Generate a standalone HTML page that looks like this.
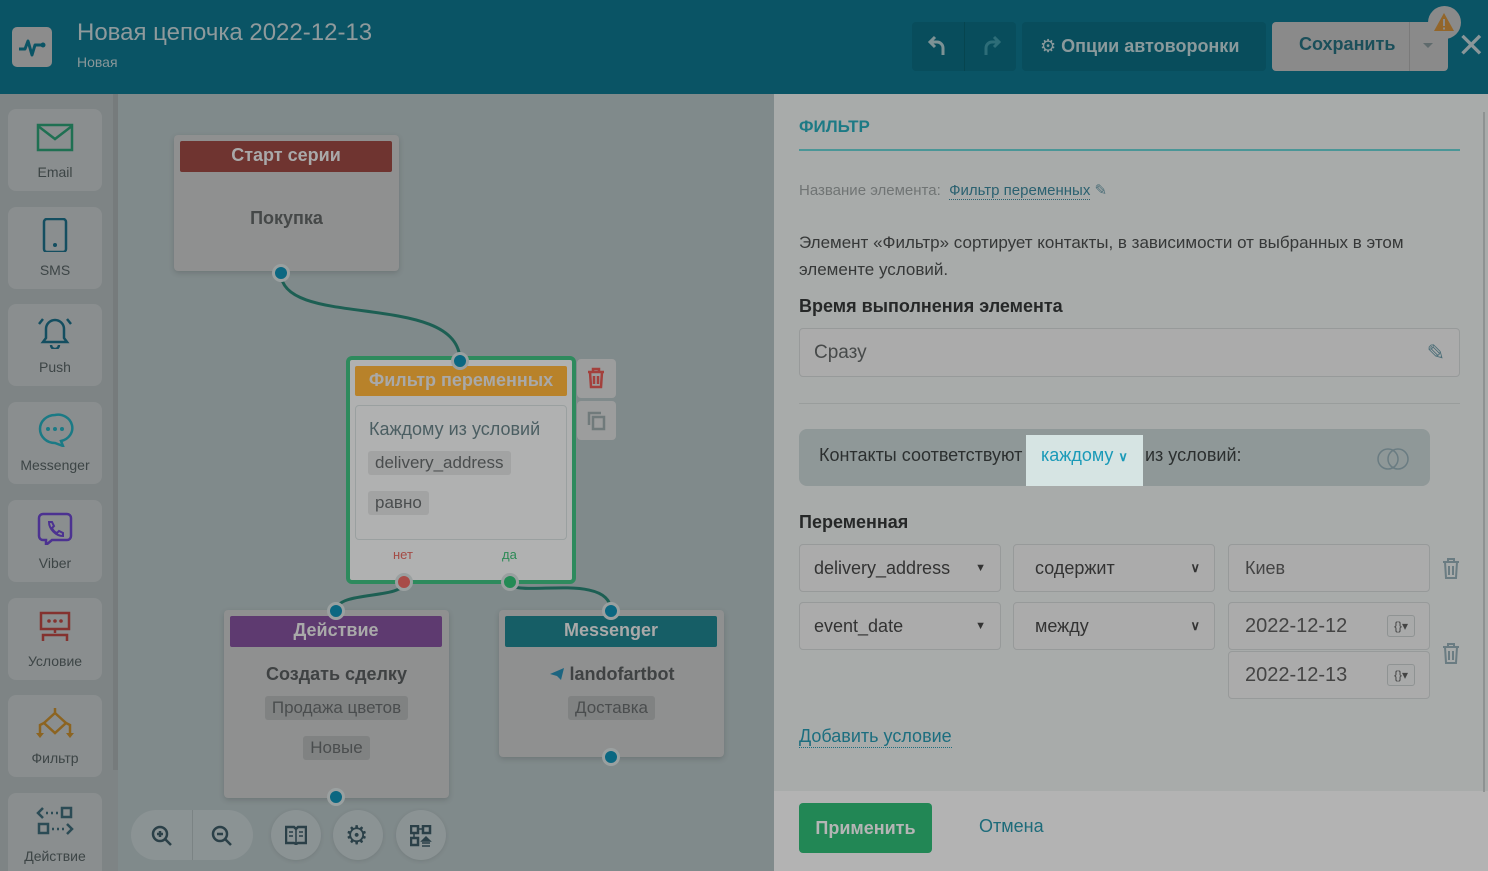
<!DOCTYPE html>
<html style="overflow:hidden;height:871px"><head><meta charset="utf-8"><style>
*{box-sizing:border-box;margin:0;padding:0}
html,body{overflow:hidden}
body{width:1488px;height:871px;overflow:hidden;position:relative;font-family:"Liberation Sans","DejaVu Sans",sans-serif;background:#808a8b}
.a{position:absolute}
.hdr{left:0;top:0;width:1488px;height:94px;background:#0a5465}
.side{left:0;top:94px;width:118px;height:777px;background:#7e8485}
.sitem{left:8px;width:94px;height:82px;background:#8a8e8f;border-radius:8px;text-align:center;color:#3d4546;font-size:14px;overflow:hidden}
.sitem svg{display:block;margin:11px auto 10px}
.node{background:#8f9090;border-radius:4px;box-shadow:0 2px 6px rgba(0,0,0,.15)}
.nh{color:#a9a9a9;font-weight:bold;font-size:18px;text-align:center;border-radius:2px}
.dot{width:18px;height:18px;border-radius:50%;background:#0b6781;border:3px solid #9aa0a0}
.tag{background:#808282;color:#4a4d4e;padding:2px 7px;border-radius:3px;font-size:17px;display:inline-block}
.panel{left:774px;top:94px;width:714px;height:697px;background:#a8abaa}
.foot{left:774px;top:791px;width:714px;height:80px;background:#b3b3b3}
.nar{font-family:"Liberation Sans Narrow","Liberation Sans",sans-serif}
.inp{border:1px solid #979a9a;border-radius:4px;background:#ababab;color:#333;font-size:18px;padding:0 14px;display:flex;align-items:center}
.circ{width:50px;height:50px;border-radius:50%;background:#8b9394;box-shadow:0 1px 4px rgba(0,0,0,.1)}
</style></head><body>
<div class="a hdr"></div>
<div class="a" style="left:12px;top:27px;width:40px;height:40px;background:#8c8c8c;border-radius:5px"></div>
<svg class="a" style="left:12px;top:27px" width="40" height="40"><path d="M7 22h6l3-8 4 14 3-10h7" fill="none" stroke="#0a5465" stroke-width="3" stroke-linejoin="round"/><circle cx="31" cy="18" r="2.5" fill="#0a5465"/></svg>
<div class="a" style="left:77px;top:19px;color:#8f9a9c;font-size:24px">Новая цепочка 2022-12-13</div>
<div class="a" style="left:77px;top:54px;color:#8a9799;font-size:14px">Новая</div>
<div class="a" style="left:912px;top:22px;width:104px;height:49px;background:#084d5c;border-radius:4px"></div>
<div class="a" style="left:964px;top:22px;width:1px;height:49px;background:#06454f"></div>
<svg class="a" style="left:927px;top:34px" width="22" height="24"><path d="M8 3L3 8l5 5M3 8h7a6 6 0 016 6v7" fill="none" stroke="#7d9295" stroke-width="3"/></svg>
<svg class="a" style="left:980px;top:34px" width="22" height="24"><path d="M14 3l5 5-5 5M19 8h-7a6 6 0 00-6 6v7" fill="none" stroke="#2d6d78" stroke-width="3"/></svg>
<div class="a" style="left:1022px;top:22px;width:244px;height:49px;background:#084d5c;border-radius:4px;color:#8b9a9c;font-size:18px;font-weight:bold;line-height:49px;padding-left:18px">⚙ Опции автоворонки</div>
<div class="a" style="left:1272px;top:22px;width:176px;height:49px;background:#8a8a8a;border-radius:4px"></div>
<div class="a" style="left:1299px;top:34px;color:#1b4f5a;font-size:18px;font-weight:bold">Сохранить</div>
<div class="a" style="left:1409px;top:22px;width:1px;height:49px;background:#7a7a7a"></div>
<div class="a" style="left:1423px;top:43px;border:5px solid transparent;border-top-color:#5f6a6c"></div>
<div class="a" style="left:1428px;top:6px;width:33px;height:33px;border-radius:50%;background:#8a8a8a"></div>
<svg class="a" style="left:1432px;top:10px" width="24" height="24"><path d="M12 3L22 21H2Z" fill="#93662a"/><rect x="11" y="9" width="2" height="7" fill="#8a8a8a"/><rect x="11" y="17.5" width="2" height="2" fill="#8a8a8a"/></svg>
<div class="a" style="left:1457px;top:26px;color:#8a9699;font-size:34px;font-weight:bold">✕</div>

<div class="a side"></div>
<div class="a" style="left:113px;top:94px;width:5px;height:676px;background:#767b7c"></div>
<div class="a sitem" style="top:109px"><svg width="40" height="34"><rect x="3" y="5" width="34" height="25" fill="none" stroke="#1f7052" stroke-width="2.5"/><path d="M3 6l17 13 17-13" fill="none" stroke="#1f7052" stroke-width="2.5"/></svg>Email</div>
<div class="a sitem" style="top:207px"><svg width="40" height="34"><rect x="9" y="1" width="22" height="33" rx="3" fill="none" stroke="#144e60" stroke-width="2.5"/><circle cx="20" cy="27" r="2" fill="#144e60"/></svg>SMS</div>
<div class="a sitem" style="top:304px"><svg width="40" height="34"><path d="M8 27h24l-3-4V14a9 9 0 00-18 0v9z" fill="none" stroke="#144e60" stroke-width="2.5"/><path d="M4 9l4-5M36 9l-4-5" stroke="#144e60" stroke-width="2.5"/><path d="M16 30a4 4 0 008 0" fill="none" stroke="#144e60" stroke-width="2.5"/></svg>Push</div>
<div class="a sitem" style="top:402px"><svg width="40" height="34"><path d="M20 2a15 14 0 100 28l8 3-2-5a14 13 0 00-6-26z" fill="none" stroke="#1b7a85" stroke-width="2.5"/><circle cx="13" cy="16" r="2" fill="#1b7a85"/><circle cx="20" cy="16" r="2" fill="#1b7a85"/><circle cx="27" cy="16" r="2" fill="#1b7a85"/></svg>Messenger</div>
<div class="a sitem" style="top:500px"><svg width="40" height="34"><path d="M8 3h24a4 4 0 014 4v18a4 4 0 01-4 4H17l-6 5v-5H8a4 4 0 01-4-4V7a4 4 0 014-4z" fill="none" stroke="#4c3291" stroke-width="2.5"/><path d="M14 11l3 0 2 4-2 2a9 9 0 005 5l2-2 4 2v3c-7 0-14-7-14-14z" fill="none" stroke="#4c3291" stroke-width="2"/></svg>Viber</div>
<div class="a sitem" style="top:598px"><svg width="40" height="34"><rect x="6" y="4" width="28" height="16" fill="none" stroke="#84322f" stroke-width="2.5"/><circle cx="14" cy="12" r="1.8" fill="#84322f"/><circle cx="20" cy="12" r="1.8" fill="#84322f"/><circle cx="26" cy="12" r="1.8" fill="#84322f"/><path d="M20 20v4M8 32v-6h24v6" fill="none" stroke="#84322f" stroke-width="2.5"/></svg>Условие</div>
<div class="a sitem" style="top:695px"><svg width="40" height="34"><path d="M20 2v5l-11 10 11 10 11-10-11-10" fill="none" stroke="#8c6421" stroke-width="2.5"/><path d="M9 17l-4 2v9M31 17l4 2v9" fill="none" stroke="#8c6421" stroke-width="2.5"/><path d="M1 27h8l-4 5zM31 27h8l-4 5z" fill="#8c6421"/></svg>Фильтр</div>
<div class="a sitem" style="top:793px;height:78px;border-radius:8px 8px 0 0"><svg width="40" height="34"><path d="M8 4l-5 5 5 5" fill="none" stroke="#2b4b55" stroke-width="2.5"/><path d="M11 9h2M16 9h2M21 9h2" stroke="#2b4b55" stroke-width="2.5"/><rect x="27" y="4" width="9" height="9" fill="none" stroke="#2b4b55" stroke-width="2.5"/><rect x="4" y="20" width="9" height="9" fill="none" stroke="#2b4b55" stroke-width="2.5"/><path d="M17 25h2M22 25h2M27 25h2" stroke="#2b4b55" stroke-width="2.5"/><path d="M32 20l5 5-5 5" fill="none" stroke="#2b4b55" stroke-width="2.5"/></svg>Действие</div>

<svg class="a" style="left:0;top:0" width="774" height="871"><g fill="none" stroke="#1d5f53" stroke-width="3"><path d="M281 273C281 330 460 290 460 361"/><path d="M404 582C404 600 336 590 336 611"/><path d="M510 582C510 600 611 570 611 611"/></g></svg>

<div class="a node" style="left:174px;top:135px;width:225px;height:136px"></div>
<div class="a nh" style="left:180px;top:141px;width:212px;height:31px;line-height:29px;background:#6f3430">Старт серии</div>
<div class="a" style="left:174px;top:208px;width:225px;text-align:center;font-weight:bold;color:#454848;font-size:18px">Покупка</div>
<div class="a dot" style="left:272px;top:264px"></div>

<div class="a" style="left:346px;top:356px;width:230px;height:228px;background:#b0b1b1;border:4px solid #2e8a5d;border-radius:6px"></div>
<div class="a nh" style="left:355px;top:366px;width:212px;height:30px;line-height:28px;background:#b8822a">Фильтр переменных</div>
<div class="a" style="left:355px;top:405px;width:212px;height:135px;border:1px solid #9aa0a0;border-radius:4px"></div>
<div class="a" style="left:369px;top:419px;color:#4b5e62;font-size:18px">Каждому из условий</div>
<div class="a tag" style="left:368px;top:451px;background:#a2a3a3">delivery_address</div>
<div class="a tag" style="left:368px;top:491px;background:#a2a3a3">равно</div>
<div class="a" style="left:393px;top:547px;color:#a44b45;font-size:13px">нет</div>
<div class="a" style="left:502px;top:547px;color:#2b8a55;font-size:13px">да</div>
<div class="a dot" style="left:451px;top:352px"></div>
<div class="a dot" style="left:395px;top:573px;background:#a84c48"></div>
<div class="a dot" style="left:501px;top:573px;background:#238a55"></div>
<div class="a" style="left:577px;top:359px;width:39px;height:39px;background:#9c9d9d;border-radius:4px"></div>
<svg class="a" style="left:586px;top:367px" width="20" height="22"><path d="M2 5h16M7 5V2h6v3M4 5l1 15h10l1-15M8 9v8M12 9v8" fill="none" stroke="#a3403c" stroke-width="2.5"/></svg>
<div class="a" style="left:577px;top:401px;width:39px;height:39px;background:#9c9d9d;border-radius:4px"></div>
<svg class="a" style="left:586px;top:410px" width="22" height="22"><path d="M3 15V3h12" fill="none" stroke="#707a7b" stroke-width="2.5"/><rect x="7" y="7" width="11" height="12" fill="none" stroke="#707a7b" stroke-width="2.5"/></svg>

<div class="a node" style="left:224px;top:610px;width:225px;height:188px"></div>
<div class="a nh" style="left:230px;top:616px;width:212px;height:31px;line-height:29px;background:#5e3a70">Действие</div>
<div class="a" style="left:224px;top:664px;width:225px;text-align:center;font-weight:bold;color:#3f4243;font-size:18px">Создать сделку</div>
<div class="a" style="left:224px;top:696px;width:225px;text-align:center"><span class="tag">Продажа цветов</span></div>
<div class="a" style="left:224px;top:736px;width:225px;text-align:center"><span class="tag">Новые</span></div>
<div class="a dot" style="left:327px;top:602px"></div>
<div class="a dot" style="left:327px;top:788px"></div>

<div class="a node" style="left:499px;top:610px;width:225px;height:147px"></div>
<div class="a nh" style="left:505px;top:616px;width:212px;height:31px;line-height:29px;background:#165e66">Messenger</div>
<div class="a" style="left:499px;top:664px;width:225px;text-align:center;font-weight:bold;color:#3f4243;font-size:18px"><svg width="16" height="14" style="vertical-align:-1px"><path d="M1 7L15 1l-3 12-4-4z" fill="#1d6580"/></svg> landofartbot</div>
<div class="a" style="left:499px;top:696px;width:225px;text-align:center"><span class="tag">Доставка</span></div>
<div class="a dot" style="left:602px;top:602px"></div>
<div class="a dot" style="left:602px;top:748px"></div>

<div class="a" style="left:131px;top:810px;width:122px;height:50px;border-radius:25px;background:#8b9394"></div>
<div class="a" style="left:192px;top:810px;width:1px;height:50px;background:#7b8384"></div>
<svg class="a" style="left:151px;top:825px" width="22" height="22"><circle cx="9" cy="9" r="7" fill="none" stroke="#2b4048" stroke-width="2.5"/><path d="M14 14l6 6M6 9h6M9 6v6" stroke="#2b4048" stroke-width="2.5"/></svg>
<svg class="a" style="left:211px;top:825px" width="22" height="22"><circle cx="9" cy="9" r="7" fill="none" stroke="#2b4048" stroke-width="2.5"/><path d="M14 14l6 6M6 9h6" stroke="#2b4048" stroke-width="2.5"/></svg>
<div class="a circ" style="left:271px;top:810px"></div>
<svg class="a" style="left:285px;top:825px" width="22" height="20"><path d="M1 2h8l2 2 2-2h8v16h-8l-2 1-2-1H1z" fill="none" stroke="#2b4048" stroke-width="2.5"/><path d="M11 4v15M4 7h4M4 11h4M14 7h4M14 11h4" stroke="#2b4048" stroke-width="1.5"/></svg>
<div class="a circ" style="left:333px;top:810px"></div>
<div class="a" style="left:345px;top:820px;color:#2b4048;font-size:26px;line-height:30px">⚙</div>
<div class="a circ" style="left:396px;top:810px"></div>
<svg class="a" style="left:410px;top:825px" width="22" height="22"><rect x="1" y="1" width="7" height="7" fill="none" stroke="#2b4048" stroke-width="2.5"/><rect x="13" y="1" width="7" height="7" fill="none" stroke="#2b4048" stroke-width="2.5"/><rect x="1" y="13" width="7" height="7" fill="none" stroke="#2b4048" stroke-width="2.5"/><path d="M8 4h5M4 8v5M12 16l4-4 4 4zM12 18h8M12 21h8" stroke="#2b4048" stroke-width="1.5" fill="#2b4048"/></svg>

<div class="a panel"></div>
<div class="a foot"></div>
<div class="a" style="left:1483px;top:112px;width:2px;height:680px;background:#8e9292"></div>
<div class="a nar" style="left:799px;top:117px;color:#1c7a85;font-weight:bold;font-size:17px">ФИЛЬТР</div>
<div class="a" style="left:799px;top:149px;width:661px;height:2px;background:#4a9697"></div>
<div class="a nar" style="left:799px;top:181px;font-size:15px;color:#707474">Название элемента: &nbsp;<span style="color:#2b6170;border-bottom:1px dotted #2b6170">Фильтр переменных</span> <span style="color:#4c6e78">✎</span></div>
<div class="a nar" style="left:799px;top:229px;width:670px;font-size:17px;line-height:27px;color:#363838">Элемент «Фильтр» сортирует контакты, в зависимости от выбранных в этом элементе условий.</div>
<div class="a nar" style="left:799px;top:296px;font-size:18px;font-weight:bold;color:#262828">Время выполнения элемента</div>
<div class="a inp nar" style="left:799px;top:328px;width:661px;height:49px;font-size:19px;color:#474a4a">Сразу<span style="margin-left:auto;color:#4c6e78;font-size:22px">✎</span></div>
<div class="a" style="left:799px;top:403px;width:661px;height:1px;background:#999d9c"></div>
<div class="a" style="left:799px;top:429px;width:631px;height:57px;background:#8f9898;border-radius:8px"></div>
<div class="a" style="left:1026px;top:435px;width:117px;height:51px;background:#d6e4e3"></div>
<div class="a nar" style="left:819px;top:445px;font-size:18px;color:#2c3030">Контакты соответствуют</div>
<div class="a nar" style="left:1041px;top:445px;font-size:18px;color:#1a9ab8">каждому <span style="font-size:13px;font-weight:bold">∨</span></div>
<div class="a nar" style="left:1145px;top:445px;font-size:18px;color:#2c3030">из условий:</div>
<svg class="a" style="left:1377px;top:447px" width="34" height="24"><circle cx="11" cy="12" r="10" fill="none" stroke="#6a7c82" stroke-width="1.5"/><circle cx="21" cy="12" r="10" fill="none" stroke="#6a7c82" stroke-width="1.5"/></svg>
<div class="a nar" style="left:799px;top:512px;font-size:18px;font-weight:bold;color:#262828">Переменная</div>
<div class="a inp nar" style="left:799px;top:544px;width:202px;height:48px">delivery_address<span style="margin-left:auto;font-size:11px">▼</span></div>
<div class="a inp nar" style="left:1013px;top:544px;width:202px;height:48px;padding-left:21px">содержит<span style="margin-left:auto;font-size:13px;font-weight:bold">∨</span></div>
<div class="a inp nar" style="left:1228px;top:544px;width:202px;height:48px;padding-left:16px;color:#444">Киев</div>
<div class="a inp nar" style="left:799px;top:602px;width:202px;height:48px">event_date<span style="margin-left:auto;font-size:11px">▼</span></div>
<div class="a inp nar" style="left:1013px;top:602px;width:202px;height:48px;padding-left:21px">между<span style="margin-left:auto;font-size:13px;font-weight:bold">∨</span></div>
<div class="a inp nar" style="left:1228px;top:602px;width:202px;height:48px;padding-left:16px;font-size:20px;color:#444">2022-12-12<span style="margin-left:auto;border:1px solid #8f9393;border-radius:3px;font-size:12px;padding:3px 6px;background:#a9aaaa">{}▾</span></div>
<div class="a inp nar" style="left:1228px;top:651px;width:202px;height:48px;padding-left:16px;font-size:20px;color:#444">2022-12-13<span style="margin-left:auto;border:1px solid #8f9393;border-radius:3px;font-size:12px;padding:3px 6px;background:#a9aaaa">{}▾</span></div>
<svg class="a" style="left:1442px;top:558px" width="18" height="22"><path d="M1 4h16M6 4V1h6v3M3 4l1 16h10l1-16M7 8v9M11 8v9" fill="none" stroke="#6a7c82" stroke-width="2"/></svg>
<svg class="a" style="left:1442px;top:643px" width="18" height="22"><path d="M1 4h16M6 4V1h6v3M3 4l1 16h10l1-16M7 8v9M11 8v9" fill="none" stroke="#6a7c82" stroke-width="2"/></svg>
<div class="a nar" style="left:799px;top:726px;font-size:18px;color:#1c6e7f;border-bottom:1px dotted #1c6e7f">Добавить условие</div>
<div class="a nar" style="left:799px;top:803px;width:133px;height:50px;background:#228755;border-radius:4px;color:#b5b5b5;font-weight:bold;font-size:18px;text-align:center;line-height:50px">Применить</div>
<div class="a nar" style="left:979px;top:816px;font-size:18px;color:#1d6b7a">Отмена</div>
</body></html>
